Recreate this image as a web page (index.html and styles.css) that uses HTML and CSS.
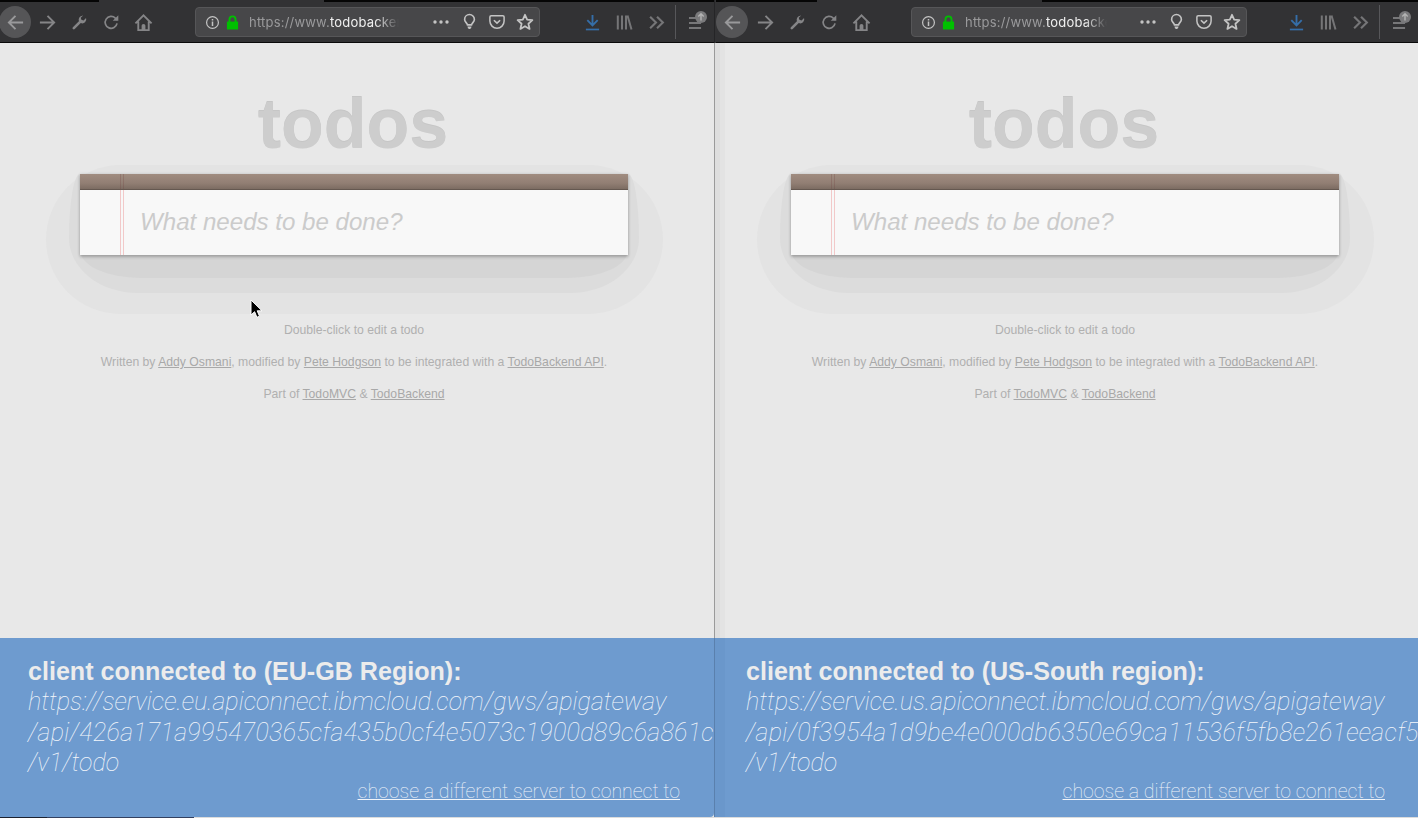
FILE: index.html
```html
<!DOCTYPE html>
<html lang="en">
<head>
  <meta charset="UTF-8">
  <meta name="viewport" content="width=device-width, initial-scale=1.0">
  <title>todos - two regions</title>
  <link rel="stylesheet" href="styles.css">
</head>
<body>
  <svg class="sprite" width="0" height="0" aria-hidden="true">
    <symbol id="i-back" viewBox="0 0 20 20"><path d="M18 10H3M10 3l-7 7 7 7" fill="none" stroke="currentColor" stroke-width="2"/></symbol>
    <symbol id="i-forward" viewBox="0 0 20 20"><path d="M2 10h15M10 3l7 7-7 7" fill="none" stroke="currentColor" stroke-width="2"/></symbol>
    <symbol id="i-wrench" viewBox="0 0 20 20"><path d="M13.500 2.200a4.600 4.600 0 0 0-4.200 6.200L2.200 15.500a1.500 1.500 0 0 0 2.200 2.200l7.100-7.100a4.600 4.600 0 0 0 6.200-5.800l-2.900 2.800-2.600-.7-.7-2.500 2.800-2.500a4.600 4.600 0 0 0-.8-.1z" fill="currentColor"/></symbol>
    <symbol id="i-reload" viewBox="0 0 20 20"><path d="M16.500 11a7 7 0 1 1-2-6.200L17 7" fill="none" stroke="currentColor" stroke-width="2"/><path d="M18 1.500V8h-6.500z" fill="currentColor"/></symbol>
    <symbol id="i-home" viewBox="0 0 20 20"><path d="M1.500 11 10 2.500l8.500 8.500M4.500 9v9h11V9" fill="none" stroke="currentColor" stroke-width="2"/><path d="M8 18v-4.500a2 2 0 0 1 4 0V18z" fill="currentColor"/></symbol>
    <symbol id="i-info" viewBox="0 0 16 16"><circle cx="8" cy="8" r="6.300" fill="none" stroke="currentColor" stroke-width="1.300"/><path d="M7.200 7h1.600v4.800H7.200zM7.200 4.200h1.600v1.600H7.200z" fill="currentColor"/></symbol>
    <symbol id="i-lock" viewBox="0 0 14 16"><path d="M1 7h12v8.500H1z" fill="currentColor"/><path d="M3.700 7.500V4.700a3.300 3.300 0 0 1 6.600 0v2.800" fill="none" stroke="currentColor" stroke-width="2"/></symbol>
    <symbol id="i-dots" viewBox="0 0 16 4"><circle cx="2" cy="2" r="1.700" fill="currentColor"/><circle cx="8" cy="2" r="1.700" fill="currentColor"/><circle cx="14" cy="2" r="1.700" fill="currentColor"/></symbol>
    <symbol id="i-bulb" viewBox="0 0 16 20"><path d="M5.500 13.500C5 11 2 10 2 6.800a6 6 0 0 1 12 0c0 3.200-3 4.200-3.500 6.700z" fill="none" stroke="currentColor" stroke-width="2"/><path d="M5.500 15.500h5l-.6 2.200-1.400 1h-1l-1.400-1z" fill="currentColor"/></symbol>
    <symbol id="i-pocket" viewBox="0 0 18 18"><path d="M2.500 2h13A1.500 1.500 0 0 1 17 3.500V8a8 8 0 0 1-16 0V3.500A1.500 1.500 0 0 1 2.500 2z" fill="none" stroke="currentColor" stroke-width="1.700"/><path d="M5.500 7 9 10.300 12.500 7" fill="none" stroke="currentColor" stroke-width="1.800"/></symbol>
    <symbol id="i-star" viewBox="0 0 20 20"><path d="m10 2 2.400 5.400 5.800.6-4.400 3.900 1.300 5.800L10 14.700l-5.100 3 1.300-5.800L1.800 8l5.800-.6z" fill="none" stroke="currentColor" stroke-width="2" stroke-linejoin="round"/></symbol>
    <symbol id="i-download" viewBox="0 0 16 18"><path d="M8 1v10.500M2.500 6.500 8 12l5.500-5.500" fill="none" stroke="currentColor" stroke-width="2"/><path d="M1 15.500h14v1.800H1z" fill="currentColor"/></symbol>
    <symbol id="i-library" viewBox="0 0 17 16"><path d="M1.800 1v14M6 1v14M10 1v14M11.500 1l4 14" fill="none" stroke="currentColor" stroke-width="2"/></symbol>
    <symbol id="i-more" viewBox="0 0 16 14"><path d="m2 1.500 5.500 5.500L2 12.500M8.500 1.500 14 7l-5.500 5.500" fill="none" stroke="currentColor" stroke-width="2"/></symbol>
    <symbol id="i-menu" viewBox="0 0 14 14"><path d="M0 1.500h8M0 7h13M0 12.500h13" fill="none" stroke="currentColor" stroke-width="1.600"/></symbol>
    <symbol id="i-badge" viewBox="0 0 12 12"><circle cx="6" cy="6" r="6" fill="#7a7a7c"/><path d="M6 9.500V3M3.300 5.500 6 2.800l2.700 2.700" fill="none" stroke="#b4b4b4" stroke-width="1.400"/></symbol>
  </svg>

  <div class="panes">
    <section class="pane pane-eu">
      <div class="tab-strip"><div class="tab-gap"></div></div>
      <div class="toolbar">
        <span class="btn back"><svg class="ic ic-lg"><use href="#i-back"/></svg></span>
        <span class="btn"><svg class="ic ic-lg"><use href="#i-forward"/></svg></span>
        <span class="btn"><svg class="ic"><use href="#i-wrench"/></svg></span>
        <span class="btn"><svg class="ic"><use href="#i-reload"/></svg></span>
        <span class="btn"><svg class="ic ic-lg"><use href="#i-home"/></svg></span>
        <div class="url-bar">
          <svg class="u-info"><use href="#i-info"/></svg>
          <svg class="u-lock"><use href="#i-lock"/></svg>
          <span class="url-text">https://www.<b>todobackend.com</b></span>
          <svg class="u-dots"><use href="#i-dots"/></svg>
          <svg class="u-bulb"><use href="#i-bulb"/></svg>
          <svg class="u-pocket"><use href="#i-pocket"/></svg>
          <svg class="u-star"><use href="#i-star"/></svg>
        </div>
        <span class="btn dl"><svg class="ic"><use href="#i-download"/></svg></span>
        <span class="btn dim"><svg class="ic"><use href="#i-library"/></svg></span>
        <span class="btn dim"><svg class="ic"><use href="#i-more"/></svg></span>
        <span class="sep"></span>
        <span class="btn menu">
          <svg class="ic-menu"><use href="#i-menu"/></svg>
          <svg class="badge"><use href="#i-badge"/></svg>
        </span>
      </div>
      <main class="page">
        <h1 class="logo">todos</h1>
        <div class="todo-wrap">
          <div class="blob blob-outer"></div>
          <div class="blob blob-mid"></div>
          <div class="blob blob-inner"></div>
          <div class="todo-box">
            <div class="todo-head"></div>
            <div class="todo-input">What needs to be done?</div>
          </div>
        </div>
        <footer class="info">
          <p>Double-click to edit a todo</p>
          <p>Written by <a href="#">Addy Osmani</a>, modified by <a href="#">Pete Hodgson</a> to be integrated with a <a href="#">TodoBackend API</a>.</p>
          <p>Part of <a href="#">TodoMVC</a> &amp; <a href="#">TodoBackend</a></p>
        </footer>
      </main>
      <div class="banner">
        <div class="banner-title">client connected to (EU-GB Region):</div>
        <div class="banner-url">https://service.eu.apiconnect.ibmcloud.com/gws/apigateway</div>
        <div class="banner-url banner-api">/api/426a171a995470365cfa435b0cf4e5073c1900d89c6a861c</div>
        <div class="banner-url">/v1/todo</div>
        <a class="banner-link" href="#">choose a different server to connect to</a>
      </div>
    </section>

    <div class="divider"></div>

    <section class="pane pane-us">
      <div class="tab-strip"><div class="tab-gap"></div></div>
      <div class="toolbar">
        <span class="btn back"><svg class="ic ic-lg"><use href="#i-back"/></svg></span>
        <span class="btn"><svg class="ic ic-lg"><use href="#i-forward"/></svg></span>
        <span class="btn"><svg class="ic"><use href="#i-wrench"/></svg></span>
        <span class="btn"><svg class="ic"><use href="#i-reload"/></svg></span>
        <span class="btn"><svg class="ic ic-lg"><use href="#i-home"/></svg></span>
        <div class="url-bar">
          <svg class="u-info"><use href="#i-info"/></svg>
          <svg class="u-lock"><use href="#i-lock"/></svg>
          <span class="url-text">https://www.<b>todobackend.com</b></span>
          <svg class="u-dots"><use href="#i-dots"/></svg>
          <svg class="u-bulb"><use href="#i-bulb"/></svg>
          <svg class="u-pocket"><use href="#i-pocket"/></svg>
          <svg class="u-star"><use href="#i-star"/></svg>
        </div>
        <span class="btn dl"><svg class="ic"><use href="#i-download"/></svg></span>
        <span class="btn dim"><svg class="ic"><use href="#i-library"/></svg></span>
        <span class="btn dim"><svg class="ic"><use href="#i-more"/></svg></span>
        <span class="sep"></span>
        <span class="btn menu">
          <svg class="ic-menu"><use href="#i-menu"/></svg>
          <svg class="badge"><use href="#i-badge"/></svg>
        </span>
      </div>
      <main class="page">
        <h1 class="logo">todos</h1>
        <div class="todo-wrap">
          <div class="blob blob-outer"></div>
          <div class="blob blob-mid"></div>
          <div class="blob blob-inner"></div>
          <div class="todo-box">
            <div class="todo-head"></div>
            <div class="todo-input">What needs to be done?</div>
          </div>
        </div>
        <footer class="info">
          <p>Double-click to edit a todo</p>
          <p>Written by <a href="#">Addy Osmani</a>, modified by <a href="#">Pete Hodgson</a> to be integrated with a <a href="#">TodoBackend API</a>.</p>
          <p>Part of <a href="#">TodoMVC</a> &amp; <a href="#">TodoBackend</a></p>
        </footer>
      </main>
      <div class="banner">
        <div class="banner-title">client connected to (US-South region):</div>
        <div class="banner-url">https://service.us.apiconnect.ibmcloud.com/gws/apigateway</div>
        <div class="banner-url banner-api">/api/0f3954a1d9be4e000db6350e69ca11536f5fb8e261eeacf5</div>
        <div class="banner-url">/v1/todo</div>
        <a class="banner-link" href="#">choose a different server to connect to</a>
      </div>
    </section>
  </div>

  <div class="dock-strip"><span class="dock-a"></span><span class="dock-b"></span></div>

  <svg class="cursor" width="14" height="20" viewBox="0 0 14 20"><path d="M1 1v15l3.600-3.300 2.300 5.600 2.600-1.100-2.300-5.400H12z" fill="#000" stroke="#fff" stroke-width="1"/></svg>
</body>
</html>
```

FILE: styles.css
```css
html, body {
  margin: 0;
  padding: 0;
  height: 100%;
  overflow: hidden;
  background: #e8e8e8;
  font-family: 'Liberation Sans', Arial, sans-serif;
}
.sprite {
  position: absolute;
}
.panes {
  display: flex;
  height: 817px;
}
.pane {
  display: flex;
  flex-direction: column;
  overflow: hidden;
  min-width: 0;
}
.pane-eu {
  width: 714px;
}
.pane-us {
  flex: 1;
}
.divider {
  width: 2px;
  background:
    linear-gradient(to bottom, #252527 43px, #9a9a9a 43px, #9a9a9a 638px, #5a80ad 638px) left / 1px 100% no-repeat,
    linear-gradient(to bottom, #323234 43px, #dedede 43px, #dedede 638px, #6a97cb 638px);
}

/* browser chrome */
.tab-strip {
  height: 2px;
  background: #050505;
}
.tab-gap {
  width: 225px;
  height: 2px;
  background: #323234;
}
.pane-eu .tab-gap {
  margin-left: 99px;
}
.pane-us .tab-gap {
  margin-left: 101px;
}
.toolbar {
  display: flex;
  align-items: center;
  height: 40px;
  background: #323234;
  border-bottom: 1px solid #0a0a0a;
  color: #858587;
  flex-shrink: 0;
}
.btn {
  display: flex;
  align-items: center;
  justify-content: center;
  width: 32px;
  height: 32px;
  flex-shrink: 0;
  position: relative;
}
.back {
  background: #555557;
  border-radius: 50%;
  color: #99999b;
}
.pane-eu .back {
  margin-left: -1px;
}
.pane-us .back {
  margin-right: 1px;
}
.dim {
  color: #757577;
}
.ic {
  width: 17px;
  height: 17px;
}
.ic-lg {
  width: 19px;
  height: 19px;
}
.url-bar {
  display: flex;
  align-items: center;
  height: 30px;
  box-sizing: border-box;
  background: #474749;
  border: 1px solid #565658;
  border-radius: 4px;
  padding-left: 9px;
  flex-shrink: 0;
  color: #c4c4c4;
}
.pane-eu .url-bar {
  width: 345px;
  margin-left: 36px;
}
.pane-us .url-bar {
  width: 336px;
  margin-left: 34px;
}
.u-info {
  width: 15px;
  height: 15px;
}
.u-lock {
  width: 13px;
  height: 15px;
  margin-left: 6px;
  color: #00c000;
}
.url-text {
  margin-left: 10px;
  margin-right: auto;
  font-family: Inter, 'Liberation Sans', sans-serif;
  font-size: 13px;
  letter-spacing: 0.2px;
  white-space: nowrap;
  overflow: hidden;
  color: #9a9a9c;
  -webkit-mask-image: linear-gradient(to right, #000 84%, transparent 100%);
  mask-image: linear-gradient(to right, #000 84%, transparent 100%);
}
.pane-eu .url-text {
  width: 150px;
}
.pane-us .url-text {
  width: 142px;
}
.url-text b {
  font-weight: 400;
  color: #f0f0f0;
}
.u-dots {
  width: 16px;
  height: 4px;
}
.u-bulb {
  width: 13px;
  height: 18px;
  margin-left: 14px;
}
.u-pocket {
  width: 16px;
  height: 16px;
  margin-left: 13px;
}
.u-star {
  width: 18px;
  height: 18px;
  margin-left: 11px;
  margin-right: 5px;
}
.dl {
  color: #356ea8;
}
.pane-eu .dl {
  margin-left: 36px;
}
.pane-us .dl {
  margin-left: 33px;
}
.sep {
  width: 1px;
  height: 34px;
  margin-left: 3px;
  background: #57575a;
  flex-shrink: 0;
}
.menu {
  margin-left: 3px;
  color: #8e8e90;
}
.ic-menu {
  width: 13px;
  height: 14px;
  margin-top: 1px;
}
.badge {
  position: absolute;
  top: 5px;
  right: 4px;
  width: 12px;
  height: 12px;
}

/* todo app */
.page {
  flex: 1;
  display: flex;
  flex-direction: column;
  align-items: center;
  box-sizing: border-box;
  min-height: 0;
}
.pane-eu .page {
  padding-right: 6px;
}
.pane-us .page {
  padding-right: 4px;
  background: linear-gradient(to right, #dedede 0, #dedede 4px, #e3e3e3 4px, #e3e3e3 9px, #e8e8e8 9px);
}
.logo {
  margin: 45px 0 0 -2px;
  height: 86px;
  font-size: 70px;
  line-height: 72px;
  font-weight: bold;
  color: #cdcdcd;
  text-shadow: 0 -1px 0 #c6c6c6;
}
.todo-wrap {
  position: relative;
  width: 548px;
}
.blob {
  position: absolute;
}
.blob-outer {
  left: -34px;
  right: -35px;
  top: -9px;
  bottom: -59px;
  border-radius: 80px;
  background: #e3e3e3;
}
.blob-mid {
  left: -11px;
  right: -11px;
  top: 0;
  bottom: -38px;
  border-radius: 12px 12px 75px 75px / 70px 70px 60px 60px;
  background: #dcdcdc;
}
.blob-inner {
  left: 0;
  right: 0;
  top: 40px;
  bottom: -23px;
  border-radius: 0 0 60px 60px / 0 0 28px 28px;
  background: #d5d5d5;
}
.todo-box {
  position: relative;
  box-shadow: 0 0 3px rgba(0, 0, 0, 0.12), 0 2px 3px rgba(0, 0, 0, 0.22);
  background-color: #f8f8f8;
  background-image: linear-gradient(to right, transparent 40px, #f2c9c9 40px, #f2c9c9 41px, transparent 41px, transparent 43px, #f2c9c9 43px, #f2c9c9 44px, transparent 44px);
}
.todo-head {
  height: 15px;
  background:
    linear-gradient(to right, transparent 40px, rgba(110, 60, 60, 0.25) 40px, rgba(110, 60, 60, 0.25) 41px, transparent 41px, transparent 43px, rgba(110, 60, 60, 0.25) 43px, rgba(110, 60, 60, 0.25) 44px, transparent 44px),
    linear-gradient(to bottom, #a08c80, #927f74 60%, #7c6c62);
  border-bottom: 1px solid #655850;
}
.todo-input {
  height: 65px;
  padding-left: 60px;
  font-size: 24.100px;
  font-style: italic;
  line-height: 64px;
  color: #cbcbcb;
}
.info {
  margin-top: 67px;
  text-align: center;
  font-size: 12.200px;
  line-height: 16px;
  color: #b0b0b0;
}
.info p {
  margin: 0 0 16px;
}
.info a {
  color: #a8a8a8;
}

/* connection banner */
.banner {
  display: flex;
  flex-direction: column;
  height: 179px;
  box-sizing: border-box;
  padding-top: 18px;
  background: #6e9bcf;
  flex-shrink: 0;
}
.pane-eu .banner {
  padding-left: 28px;
  padding-right: 34px;
  border-bottom-right-radius: 4px;
}
.pane-us .banner {
  padding-left: 30px;
  padding-right: 33px;
  background: linear-gradient(to right, #6a97cb 0, #6a97cb 9px, #6e9bcf 9px);
}
.banner-title {
  font-size: 25.100px;
  font-weight: bold;
  line-height: 31px;
  color: #ececec;
}
.banner-url {
  font-family: Roboto, 'Liberation Sans', sans-serif;
  font-size: 25.100px;
  font-style: italic;
  font-weight: 100;
  line-height: 30.500px;
  color: #f4f7fb;
  white-space: nowrap;
}
.banner-api {
  letter-spacing: 0.3px;
}
.banner-link {
  align-self: flex-end;
  margin-top: 1px;
  font-family: Roboto, 'Liberation Sans', sans-serif;
  font-size: 19.500px;
  font-weight: 100;
  line-height: 24px;
  color: #f0f4fa;
  white-space: nowrap;
}

.dock-strip {
  display: flex;
  height: 1px;
  background: #dcdcdc;
}
.dock-a {
  width: 47px;
  background: #1c2230;
}
.dock-b {
  width: 147px;
  background: #33405f;
}
.cursor {
  position: absolute;
  left: 250px;
  top: 299px;
}
```
